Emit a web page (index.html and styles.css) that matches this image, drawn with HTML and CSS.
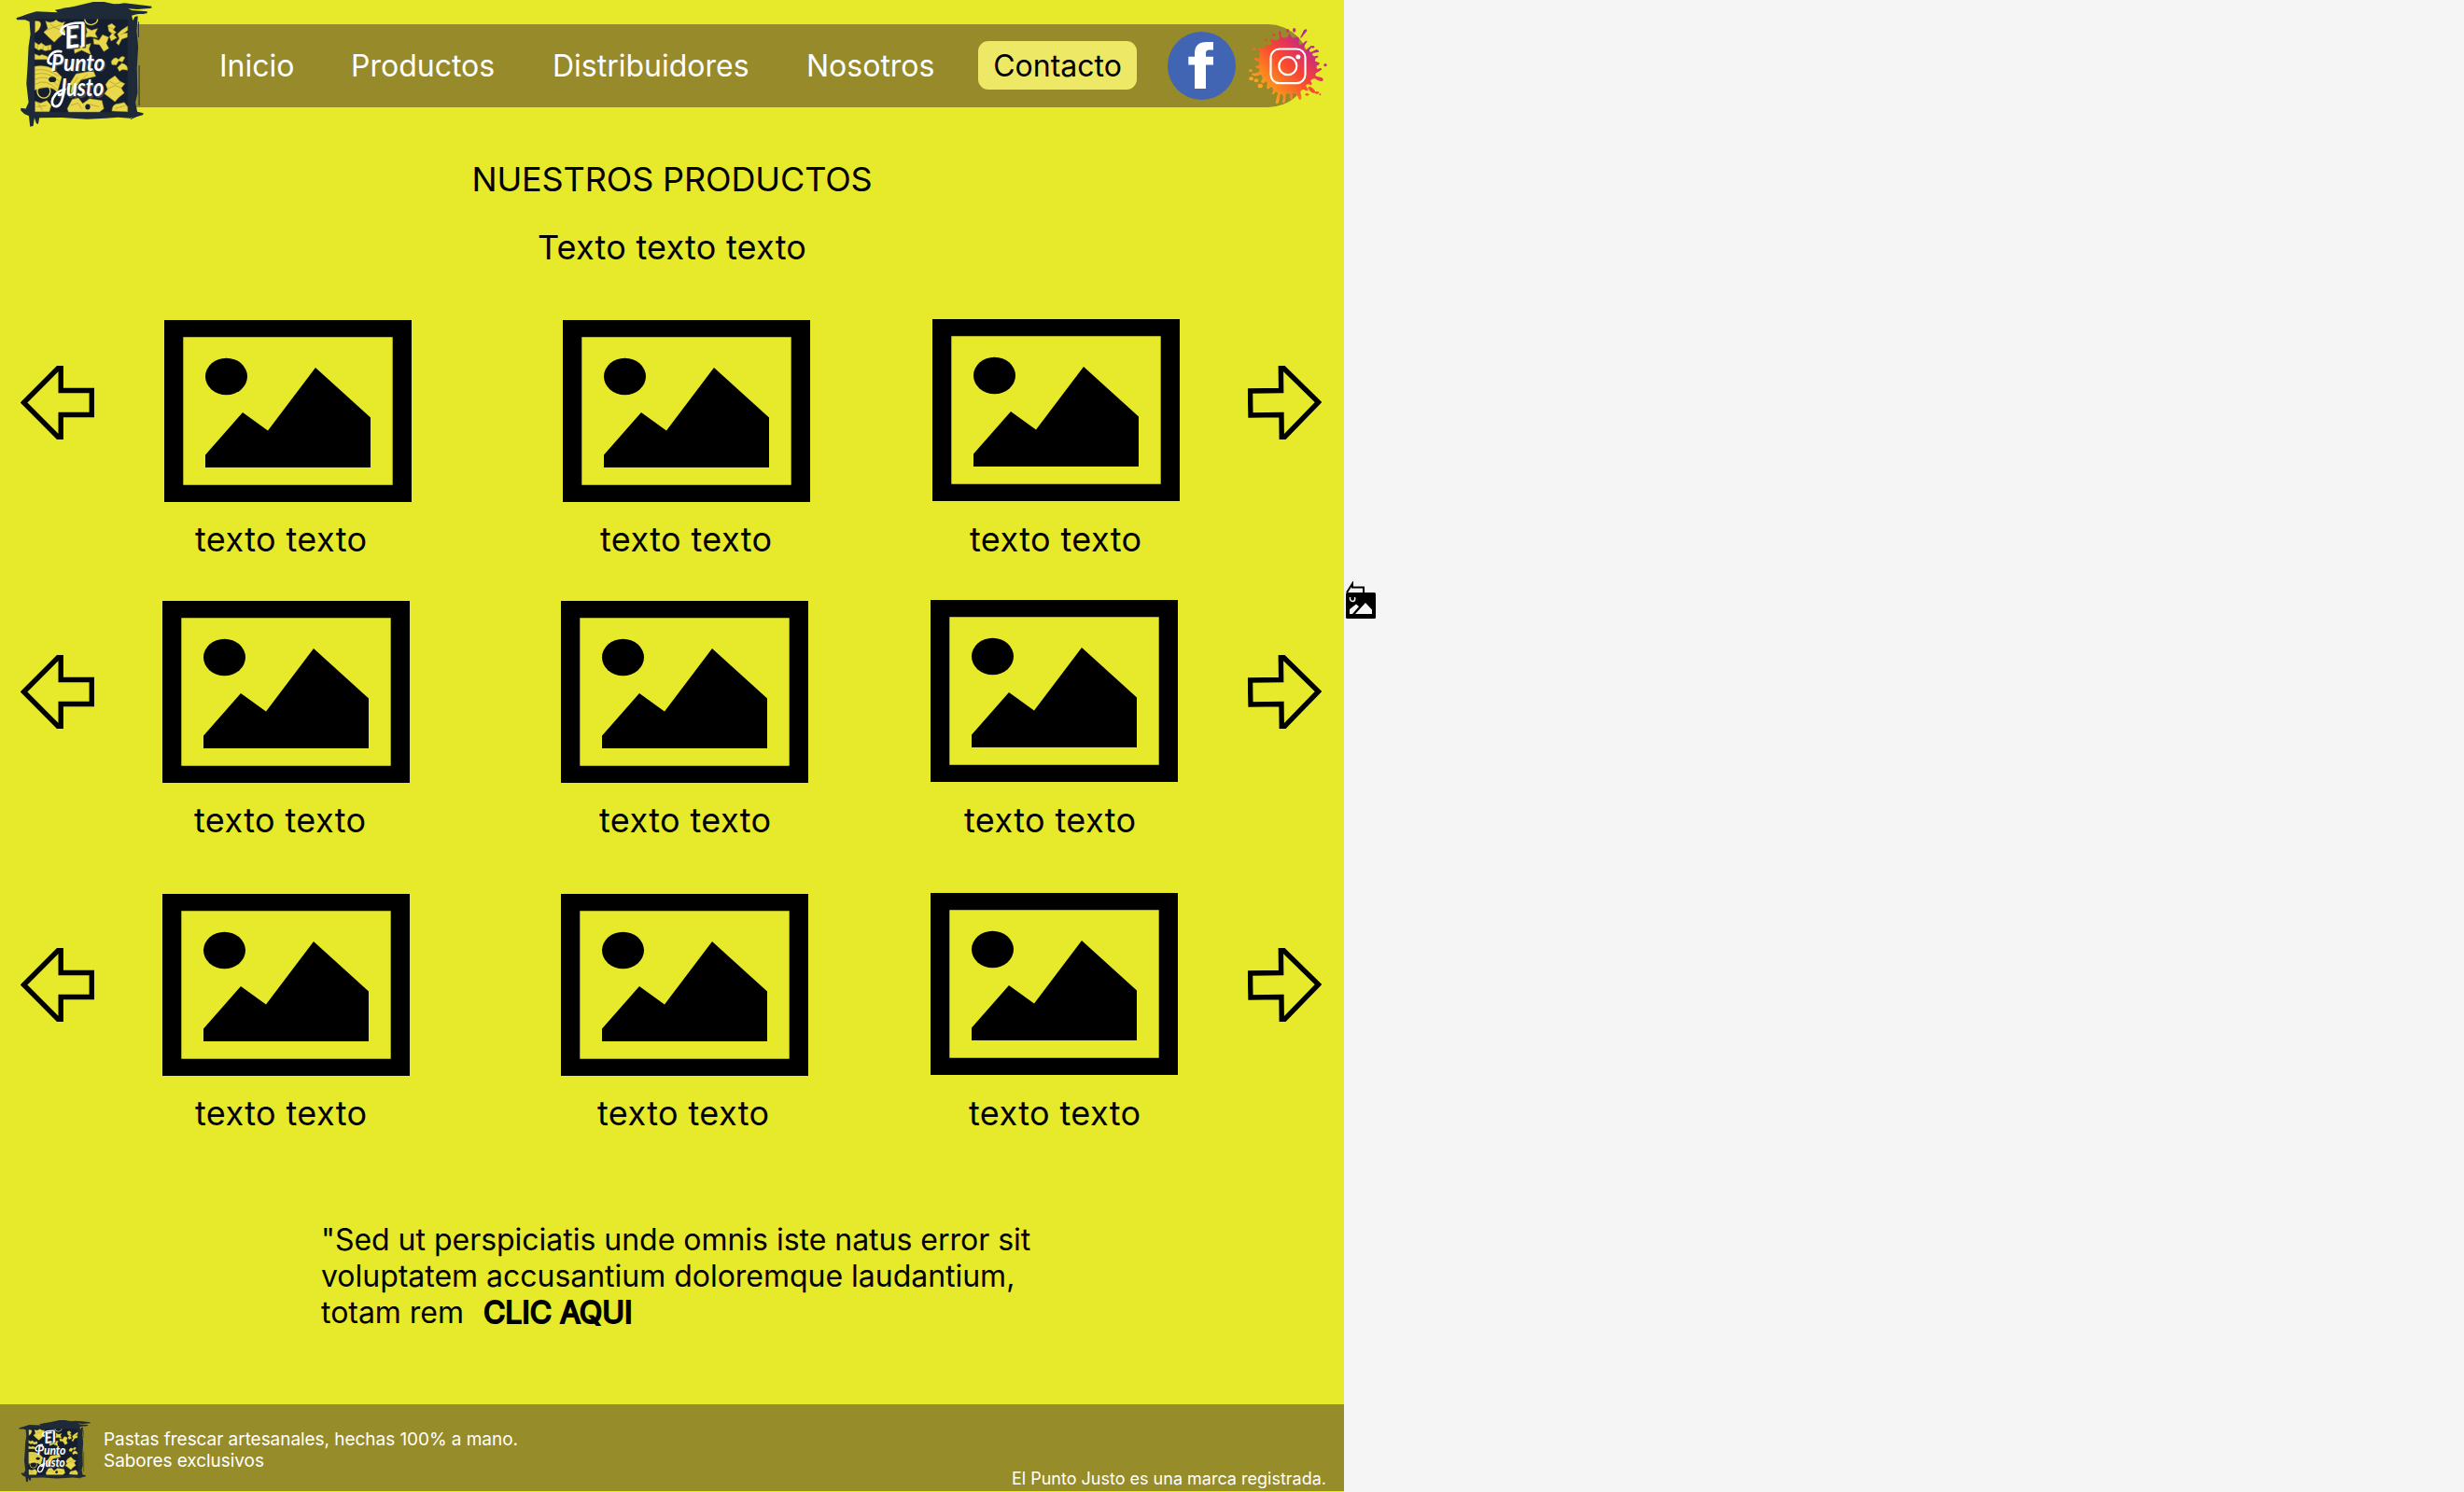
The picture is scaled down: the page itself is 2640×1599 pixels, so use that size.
FILE: index.html
```html
<!DOCTYPE html>
<html lang="es">
<head>
<meta charset="utf-8">
<title>El Punto Justo</title>
<link rel="stylesheet" href="styles.css">
</head>
<body>
<svg class="defs" width="0" height="0">
  <defs>
    <linearGradient id="splash" x1="350" y1="310" x2="600" y2="60" gradientUnits="userSpaceOnUse">
      <stop offset="0.1" stop-color="#fdc21c"/><stop offset="0.3" stop-color="#fd8a1f"/><stop offset="0.52" stop-color="#f9482f"/><stop offset="0.68" stop-color="#dc3360"/><stop offset="0.85" stop-color="#a12cab"/>
    </linearGradient>
    <symbol id="photo" viewBox="0 0 265 195">
      <path fill-rule="evenodd" d="M0 0H265V195H0ZM20.3 18.3V176.7H244.7V18.3Z"/>
      <ellipse cx="66.500" cy="60.500" rx="22.500" ry="19.700"/>
      <path d="M44 158V144.500L84 99L111 118.500L162 51L221 104.500V158Z"/>
    </symbol>
    <symbol id="arrow" viewBox="0 0 79 79">
      <path d="M3.500 39.500L40.300 2.500H43.200V26.500H76.300V52.500H43.200V76.500H40.300Z" fill="none" stroke="#000" stroke-width="5.400"/>
    </symbol>
    <symbol id="logo" viewBox="50 0 440 412" preserveAspectRatio="none">
      <path fill="#1f2a38" d="M51 58L70 52L88 45L116 37L150 38L185 40L176 32L240 20L300 6L335 6L372 14L400 10L440 14L488 20L488 26L442 30L412 28L425 33L474 37L474 43L440 46L424 50L428 66L434 54L444 52L440 100L445 150L441 220L443 300L436 330L442 360L462 365L460 371L440 376L418 381L380 378L340 381L280 384L200 379L126 380L122 400L116 398L110 380L106 406L96 408L92 374L78 368L66 356V348L82 350L91 330L84 270L88 210L91 150L97 110L94 70L80 64L54 64Z"/>
      <rect x="110" y="62" width="301" height="300" rx="5" fill="#141e2e"/>
      <g fill="none" stroke="#1f2a38" stroke-width="3">
        <path d="M200 28L380 14M350 34L465 44M446 70V120M448 210V340M60 58L130 44M420 384L455 368"/>
      </g>
      <g fill="#e9d84b" stroke="#a0921f" stroke-width="1.500">
        <path d="M146 68Q165 78 180 64Q195 78 208 70L202 86L210 104L188 122L174 136L158 122L140 104L153 92Z"/>
        <path d="M112 68Q134 66 130 82Q128 96 112 106Z"/>
        <path d="M276 88L294 98L314 92L306 108L314 122L290 118L270 122L280 104Z"/>
        <path d="M300 124L318 130L330 112L350 120L342 140L350 156L334 166L320 144L302 142Z"/>
        <path d="M236 142L262 148L292 140L286 158L292 176L262 162L240 172Z"/>
        <path d="M347 82L360 76L372 86L364 96L374 104L366 112L376 122L358 132L352 118L360 108L350 100Z"/>
        <path d="M378 110L390 98L411 84V98L398 108L410 106V120L392 126L382 146L374 138L384 124Z"/>
        <path d="M111 136L124 144L132 138L146 148L164 144V160L144 164L132 158L124 162L111 154ZM111 174L126 180L134 176L152 182V192H111Z"/>
        <path d="M358 198Q370 178 382 192Q392 176 402 186L394 200L382 196L374 210L360 208ZM378 218L392 204Q412 208 411 226L394 224L384 230Z"/>
        <path d="M340 272L350 258L370 244L386 262L402 270L390 284L400 300L382 314L370 328L352 314L336 302L346 288Z"/>
        <path d="M112 326L130 332L150 324L164 340L158 360H112ZM216 350L232 320L252 316L266 334L288 318L328 324L334 350L320 361H220ZM360 358Q360 334 384 334L400 330L411 344V360Z"/>
        <path d="M111 214Q142 208 172 222L198 248L184 298Q162 270 111 290ZM244 238L300 228L308 246L260 258L230 300L214 286Z"/>
      </g>
      <g fill="none" stroke="#e9d84b" stroke-width="4">
        <path d="M272 62Q276 80 294 80Q314 76 314 62"/>
        <ellipse cx="140" cy="294" rx="21" ry="22"/>
      </g>
      <g fill="none" stroke="#8d8320" stroke-width="1.500">
        <path d="M148 98L172 88L204 100M160 78L176 88L196 80M111 226Q150 218 188 246M111 240Q150 226 190 262M112 256Q150 236 186 276M112 272Q146 250 184 290M346 286L370 276L394 284M352 262L370 272L388 264M228 340L250 332L262 350M288 336L318 344M116 344L150 340M120 330L136 356M370 350L404 340M250 248L226 286M282 240L240 276"/>
        <path d="M350 88L368 94M354 104L370 108M388 112L404 104M120 142V156M138 146V160M154 148V160"/>
      </g>
      <ellipse cx="168" cy="256" rx="12" ry="9" fill="#141e2e"/>
      <ellipse cx="282" cy="344" rx="8" ry="9" fill="#141e2e"/>
      <g class="logo-words">
        <text class="logo-shadow" x="212" y="158" textLength="70" lengthAdjust="spacingAndGlyphs" font-size="100" transform="rotate(-6 240 130)">El</text>
        <text class="logo-shadow" x="168" y="233" textLength="174" lengthAdjust="spacingAndGlyphs" font-size="76">Punto</text>
        <text class="logo-shadow" x="190" y="315" textLength="148" lengthAdjust="spacingAndGlyphs" font-size="80">Justo</text>
        <text x="208" y="154" textLength="70" lengthAdjust="spacingAndGlyphs" font-size="100" transform="rotate(-6 240 130)">El</text>
        <text x="164" y="229" textLength="174" lengthAdjust="spacingAndGlyphs" font-size="76">Punto</text>
        <text x="186" y="311" textLength="148" lengthAdjust="spacingAndGlyphs" font-size="80">Justo</text>
        <path d="M206 110Q188 102 202 88Q224 72 268 74M164 206Q146 202 160 180Q174 162 196 166M206 290Q198 350 174 342Q158 330 178 304Q190 292 208 288" fill="none" stroke="#fff" stroke-width="8" stroke-linecap="round"/>
      </g>
    </symbol>
  </defs>
</svg>

<div class="page">
  <header class="header">
    <svg class="header-logo"><use href="#logo"/></svg>
    <nav class="nav">
      <a class="nav-link inicio">Inicio</a>
      <a class="nav-link productos">Productos</a>
      <a class="nav-link distribuidores">Distribuidores</a>
      <a class="nav-link nosotros">Nosotros</a>
      <a class="nav-link contact">Contacto</a>
    </nav>
    <svg class="facebook" viewBox="0 0 73 73">
      <circle cx="36.500" cy="36.500" r="36.500" fill="#4165b3"/>
      <path fill="#fff" d="M29 61V35.500H22.300V26.700H29V23.500C29 14.500 34 11 41.500 11H49V19.500H44.500C42 19.500 41 20.800 41 23V26.700H49V35.500H41V61Z"/>
    </svg>
    <svg class="instagram" viewBox="350 50 260 260">
      <g fill="url(#splash)">
        <path d="M384 158Q370 150 371 158Q374 165 386 166Q391 176 383 180L373 183Q378 190 388 190L386 200Q375 207 364 204Q360 210 369 212Q378 216 392 208L398 220Q392 228 392 233Q400 240 406 232Q414 228 412 240Q408 254 416 256Q424 244 430 252Q434 262 427 270Q432 276 438 266Q444 260 446 270L439 298Q444 308 450 296L454 272Q462 268 464 282L461 298Q468 304 470 292L472 272Q482 264 486 276Q484 290 490 289Q498 284 492 270Q504 266 508 274Q514 292 519 290Q526 284 518 264Q524 254 532 258Q540 264 544 258L536 244Q542 236 552 243Q560 238 551 230Q556 220 566 222Q578 232 590 229Q596 222 586 218L570 214Q562 206 576 200L587 193Q588 184 576 190Q568 192 572 180Q582 178 580 171L567 166Q562 158 576 153Q578 146 564 150Q556 150 558 140L578 136Q580 130 570 128L554 136Q545 136 549 128L558 118Q554 112 546 122L535 130Q526 124 534 112L541 102Q538 96 528 108L518 114Q510 108 516 94Q510 84 502 90Q490 94 488 84L484 77Q478 78 480 87Q470 94 458 88L455 69Q449 66 449 76L453 90Q448 102 436 98L424 94L420 100L428 106Q424 118 412 114Q402 116 400 124Q388 122 383 126L390 134Q382 144 390 148Z"/>
        <ellipse cx="478" cy="68" rx="4" ry="6"/><ellipse cx="499" cy="66" rx="5" ry="7"/>
        <path d="M519 88L530 66Q540 58 540 68L524 88Q519 94 519 88Z"/>
        <circle cx="433" cy="81" r="4"/><circle cx="408" cy="97" r="5"/><ellipse cx="370" cy="127" rx="5" ry="4"/>
        <ellipse cx="359" cy="196" rx="6" ry="4"/><ellipse cx="361" cy="222" rx="7" ry="6"/><ellipse cx="377" cy="228" rx="7" ry="6"/>
        <ellipse cx="390" cy="245" rx="8" ry="7"/><ellipse cx="559" cy="120" rx="5" ry="4"/><circle cx="599" cy="178" r="5"/>
        <ellipse cx="555" cy="258" rx="14" ry="6" transform="rotate(40 555 258)"/><ellipse cx="540" cy="273" rx="6" ry="4"/><ellipse cx="572" cy="267" rx="6" ry="4"/><circle cx="582" cy="273" r="3"/>
      </g>
      <g fill="none" stroke="#fff" stroke-width="6.500">
        <rect x="423.500" y="126.500" width="111" height="110" rx="28"/><circle cx="478.500" cy="181" r="28.500"/>
      </g>
      <circle cx="511.500" cy="152" r="7.500" fill="#fff"/>
    </svg>
  </header>

  <main class="main">
    <h1 class="title">NUESTROS PRODUCTOS</h1>
    <p class="subtitle">Texto texto texto</p>

    <section class="row first">
      <svg class="arrow"><use href="#arrow"/></svg>
      <figure class="card a"><svg class="photo"><use href="#photo"/></svg><figcaption>texto texto</figcaption></figure>
      <figure class="card b"><svg class="photo"><use href="#photo"/></svg><figcaption>texto texto</figcaption></figure>
      <figure class="card c"><svg class="photo"><use href="#photo"/></svg><figcaption>texto texto</figcaption></figure>
      <svg class="arrow next"><use href="#arrow"/></svg>
    </section>
    <section class="row second">
      <svg class="arrow"><use href="#arrow"/></svg>
      <figure class="card a"><svg class="photo"><use href="#photo"/></svg><figcaption>texto texto</figcaption></figure>
      <figure class="card b"><svg class="photo"><use href="#photo"/></svg><figcaption>texto texto</figcaption></figure>
      <figure class="card c"><svg class="photo"><use href="#photo"/></svg><figcaption>texto texto</figcaption></figure>
      <svg class="arrow next"><use href="#arrow"/></svg>
    </section>
    <section class="row third">
      <svg class="arrow"><use href="#arrow"/></svg>
      <figure class="card a"><svg class="photo"><use href="#photo"/></svg><figcaption>texto texto</figcaption></figure>
      <figure class="card b"><svg class="photo"><use href="#photo"/></svg><figcaption>texto texto</figcaption></figure>
      <figure class="card c"><svg class="photo"><use href="#photo"/></svg><figcaption>texto texto</figcaption></figure>
      <svg class="arrow next"><use href="#arrow"/></svg>
    </section>

    <p class="note">"Sed ut perspiciatis unde omnis iste natus error sit<br>voluptatem accusantium doloremque laudantium,<br>totam rem<a class="cta">CLIC AQUI</a></p>
  </main>

  <footer class="footer">
    <svg class="footer-logo"><use href="#logo"/></svg>
    <p class="tagline">Pastas frescar artesanales, hechas 100% a mano.<br>Sabores exclusivos</p>
    <p class="legal">El Punto Justo es una marca registrada.</p>
  </footer>
</div>

<svg class="stray" viewBox="0 0 32 40">
  <path d="M1 12L7 2.500V6.500H19V12" fill="none" stroke="#000" stroke-width="2"/>
  <rect x="0" y="12" width="32" height="28" rx="1.500"/>
  <path fill="#f5f5f5" d="M4 30L11 24.500L14 27L7 35H4ZM10 35L21 23L28 30.500V35Z"/>
  <path d="M4.500 17Q4 21.500 7.500 21.500Q10.500 21 9.500 17" fill="none" stroke="#f5f5f5" stroke-width="1.500"/>
</svg>
</body>
</html>
```
FILE: styles.css
```css
* { box-sizing: border-box; }
body { margin: 0; background: #f5f5f5; font-family: Inter, sans-serif; color: #000; height: 1599px; overflow: hidden; }
h1, p, figure { margin: 0; font-weight: 400; }
svg { display: block; flex: none; }
.defs { position: absolute; }
.page { width: 1440px; height: 1599px; background: #e6ea2b; display: flex; flex-direction: column; }

.header { height: 141px; display: flex; align-items: flex-start; position: relative; }
.header::before { content: ""; position: absolute; left: 100px; top: 26px; width: 1303px; height: 89px; border-radius: 0 45px 45px 0; background: #968a2a; }
.header > * { position: relative; }
.header-logo { width: 146px; height: 137px; margin-left: 17px; }
.nav { display: flex; width: 1055px; margin-top: 44px; height: 52px; font-size: 32px; line-height: 53px; color: #fff; }
.nav-link { white-space: nowrap; flex: none; }
.inicio { width: 141px; margin-left: 72px; }
.productos { width: 216px; }
.distribuidores { width: 272px; }
.nosotros { width: 184px; }
.contact { width: 170px; text-align: center; border-radius: 11px; background: #ede866; color: #000; }
.facebook { width: 73px; height: 73px; margin: 34px 0 0 33px; }
.instagram { width: 86.700px; height: 86.700px; margin: 26.700px 0 0 12.700px; }

.main { display: flex; flex-direction: column; height: 1364px; padding-top: 29px; }
.title, .subtitle { font-size: 36px; line-height: 44px; text-align: center; }
.title { letter-spacing: -0.120px; }
.subtitle { margin-top: 29px; letter-spacing: 0.240px; }
.row { display: grid; padding-left: 22px; align-items: start; }
.row.first { margin-top: 56px; grid-template-columns: 154px 427px 396px 338px 79px; }
.row.second { margin-top: 44px; grid-template-columns: 152px 427px 396px 340px 79px; }
.row.third { margin-top: 57px; grid-template-columns: 152px 427px 396px 340px 79px; }
.arrow { width: 79px; height: 79px; margin-top: 58px; }
.first .arrow { margin-top: 49px; }
.next { transform: rotate(179.300deg); }
.card { width: 265px; display: flex; flex-direction: column; gap: 18px; }
.photo { width: 265px; height: 195px; }
.c .photo { margin: -1px 0 1px; }
.card figcaption { font-size: 36px; line-height: 44px; white-space: nowrap; letter-spacing: 0.400px; }
.first .a figcaption { margin-left: 33px; }
.first .b figcaption { margin-left: 40px; }
.first .c figcaption { margin-left: 40px; }
.second .a figcaption { margin-left: 34px; }
.second .b figcaption { margin-left: 41px; }
.second .c figcaption { margin-left: 36px; }
.third .a figcaption { margin-left: 35px; }
.third .b figcaption { margin-left: 39px; }
.third .c figcaption { margin-left: 41px; }
.note { margin: 94px 0 0 344px; font-size: 32px; line-height: 39px; white-space: nowrap; letter-spacing: -0.020px; }
.cta { margin-left: 21px; letter-spacing: -0.100px; -webkit-text-stroke: 2px #000; }

.footer { height: 93px; background: #978c2a; color: #fff; display: flex; padding-left: 20px; }
.footer-logo { width: 77px; height: 68px; margin-top: 16px; }
.tagline { font-size: 19px; line-height: 23px; letter-spacing: -0.050px; margin: 26px 0 0 14px; flex: 1; }
.legal { font-size: 18px; line-height: 22px; margin: 69px 19px 0 0; }

.logo-words { font-family: Lato, sans-serif; font-weight: 700; font-style: italic; fill: #fff; }
.logo-shadow { fill: #3f4a59; }
.stray { position: absolute; left: 1442px; top: 623px; width: 32px; height: 40px; }
```
